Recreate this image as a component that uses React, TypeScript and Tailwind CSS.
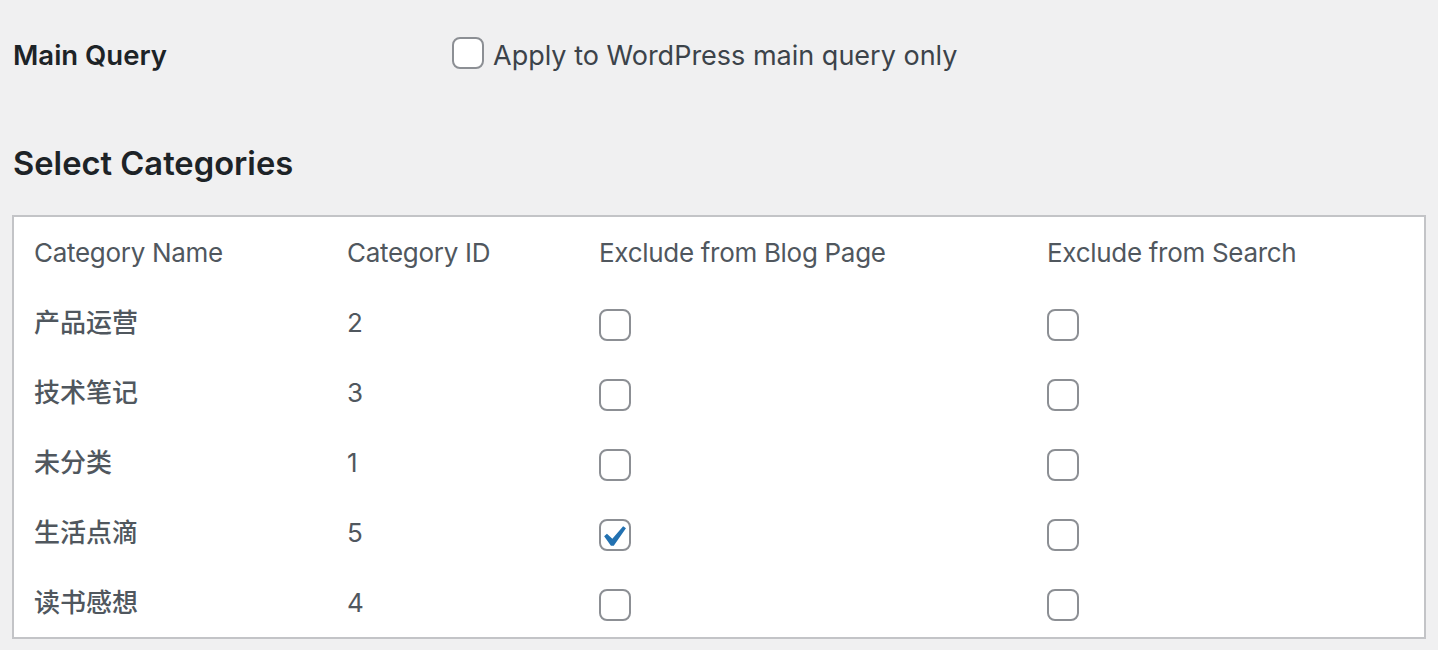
import React from 'react';

type Row = { name: string; id: number; blog: boolean; search: boolean };

const rows: Row[] = [
  { name: '产品运营', id: 2, blog: false, search: false },
  { name: '技术笔记', id: 3, blog: false, search: false },
  { name: '未分类', id: 1, blog: false, search: false },
  { name: '生活点滴', id: 5, blog: true, search: false },
  { name: '读书感想', id: 4, blog: false, search: false },
];

const Check: React.FC<{ checked?: boolean; className?: string }> = ({ checked, className = '' }) => (
  <span className={`relative inline-block w-8 h-8 shrink-0 rounded-[8px] border-2 border-[#8c8f94] bg-white ${className}`}>
    {checked && (
      <svg viewBox="0 0 20 20" className="absolute left-[-9px] top-[-5px] w-[42px] h-[42px]">
        <path fill="#2271b1" d="M14.83 4.89l1.34.94-5.81 8.38H9.02L5.78 9.67l1.34-1.25 2.57 2.4z" />
      </svg>
    )}
  </span>
);

const App: React.FC = () => {
  return (
    <div
      className="min-h-screen bg-[#f0f0f1] px-3 pt-[36px] pb-3"
      style={{ fontFamily: 'Inter, "Noto Sans CJK SC", sans-serif' }}
    >
      {/* Main Query */}
      <div className="flex items-center h-[40px]">
        <div className="w-[440px] pl-px text-[27.5px] font-semibold text-[#1d2327]">Main Query</div>
        <label className="flex items-center gap-[9px] text-[27px] text-[#3c434a]">
          <Check className="-mt-1.5" />
          Apply to WordPress main query only
        </label>
      </div>

      {/* Select Categories */}
      <h2 className="mt-[66px] h-[44px] flex items-center pl-px text-[32.7px] font-semibold text-[#1d2327]">
        Select Categories
      </h2>

      <div className="mt-[29px] border-2 border-[#c3c4c7] bg-white text-[26px] tracking-[-0.3px] text-[#50575e]">
        <div className="grid grid-cols-[313px_252px_448px_397px] h-[70px] items-center">
          <div className="px-5">Category Name</div>
          <div className="px-5">Category ID</div>
          <div className="px-5">Exclude from Blog Page</div>
          <div className="px-5">Exclude from Search</div>
        </div>
        {rows.map((r) => (
          <div key={r.id} className="grid grid-cols-[313px_252px_448px_397px] h-[70px] items-center">
            <div className="px-5 font-medium tracking-normal">{r.name}</div>
            <div className="px-5">{r.id}</div>
            <div className="px-5 flex">
              <Check checked={r.blog} className="mt-[6px]" />
            </div>
            <div className="px-5 flex">
              <Check checked={r.search} className="mt-[6px]" />
            </div>
          </div>
        ))}
      </div>
    </div>
  );
};

export default App;
